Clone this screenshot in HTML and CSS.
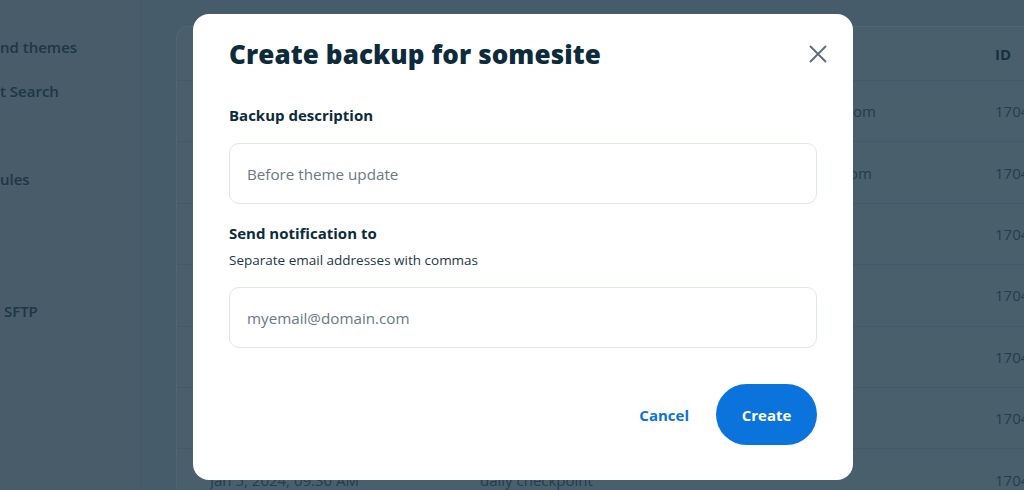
FILE: index.html
```html
<!DOCTYPE html>
<html lang="en">
<head>
<meta charset="utf-8">
<title>Create backup</title>
<link rel="stylesheet" href="styles.css">
</head>
<body>
<div class="app">
  <aside class="sidebar">
    <nav class="nav">
      <div class="nav-item">nd themes</div>
      <div class="nav-item">t Search</div>
      <div class="nav-item"></div>
      <div class="nav-item">ules</div>
      <div class="nav-item"></div>
      <div class="nav-item"></div>
      <div class="nav-item">&nbsp;SFTP</div>
    </nav>
  </aside>
  <main class="main">
    <section class="card">
      <div class="row head">
        <div>Created</div><div>Description</div><div>Created by</div><div>ID</div>
      </div>
      <div class="row"><div>Jan 11, 2024, 02:14 PM</div><div>Before plugin update</div><div class="email e1">me@somesite.com</div><div>17049</div></div>
      <div class="row"><div>Jan 10, 2024, 09:30 AM</div><div>Manual backup</div><div class="email e2">me@somesite.com</div><div>17048</div></div>
      <div class="row"><div>Jan 9, 2024, 09:30 AM</div><div>daily checkpoint</div><div></div><div>17047</div></div>
      <div class="row"><div>Jan 8, 2024, 09:30 AM</div><div>daily checkpoint</div><div></div><div>17046</div></div>
      <div class="row"><div>Jan 7, 2024, 09:30 AM</div><div>daily checkpoint</div><div></div><div>17045</div></div>
      <div class="row"><div>Jan 6, 2024, 09:30 AM</div><div>daily checkpoint</div><div></div><div>17044</div></div>
      <div class="row"><div>Jan 5, 2024, 09:30 AM</div><div>daily checkpoint</div><div></div><div>17043</div></div>
    </section>
  </main>
</div>

<div class="modal" role="dialog" aria-labelledby="mtitle">
  <header class="modal-head">
    <h1 id="mtitle">Create backup for somesite</h1>
    <button class="close" aria-label="Close">
      <svg width="18" height="18" viewBox="0 0 18 18" fill="none" stroke="#5f6f7a" stroke-width="2" stroke-linecap="round"><path d="M1.5 1.5 L16.5 16.5 M16.5 1.5 L1.5 16.5"/></svg>
    </button>
  </header>
  <div class="field">
    <label class="label">Backup description</label>
    <div class="input">Before theme update</div>
  </div>
  <div class="field">
    <label class="label">Send notification to</label>
    <div class="hint">Separate email addresses with commas</div>
    <div class="input">myemail@domain.com</div>
  </div>
  <footer class="actions">
    <button class="btn-link">Cancel</button>
    <button class="btn-primary">Create</button>
  </footer>
</div>
</body>
</html>
```

FILE: styles.css
```css
* { box-sizing: border-box; }
html, body { margin: 0; padding: 0; }
body {
  width: 1024px;
  height: 490px;
  overflow: hidden;
  font-family: "Open Sans", "Liberation Sans", sans-serif;
  background: #465c6a;
  position: relative;
}
.app {
  display: flex;
  height: 490px;
}
.sidebar {
  width: 141px;
  flex: none;
  background: #485c69;
  border-right: 1px solid #42586a;
  overflow: hidden;
  padding-top: 36px;
}
.nav {
  display: flex;
  flex-direction: column;
}
.nav-item {
  height: 44px;
  line-height: 22px;
  font-size: 15px;
  font-weight: 600;
  color: #1e3646;
  white-space: pre;
}
.main {
  flex: 1;
  padding: 26px 0 0 35px;
  overflow: hidden;
}
.card {
  background: #4a5f6c;
  border: 1px solid #52666f;
  border-right: none;
  border-radius: 12px 0 0 0;
  height: 600px;
}
.row {
  display: grid;
  grid-template-columns: 270px 245px 270px 60px;
  padding-left: 33px;
  height: 61.4px;
  align-items: center;
  border-top: 1px solid #43596a;
  font-size: 15px;
  color: #233d4c;
  white-space: nowrap;
}
.row.head {
  height: 53px;
  border-top: none;
  font-weight: 700;
  color: #15303f;
}
.row > div { overflow: hidden; }
.email { text-align: right; }
.email.e1 { padding-right: 119px; }
.email.e2 { padding-right: 123px; }

.modal {
  position: absolute;
  left: 193px;
  top: 14px;
  width: 660px;
  height: 466px;
  background: #fff;
  border-radius: 16px;
  padding: 20px 36px 35px 36px;
  display: flex;
  flex-direction: column;
}
.modal-head {
  display: flex;
  align-items: center;
  justify-content: space-between;
  height: 40px;
  margin-bottom: 31px;
}
.modal-head h1 {
  margin: 0;
  font-size: 26px;
  line-height: 40px;
  font-weight: 800;
  color: #0d2b3b;
  letter-spacing: 0.1px;
}
.close {
  border: none;
  background: none;
  padding: 0;
  width: 18px;
  height: 18px;
  margin-right: -10px;
  display: flex;
}
.field {
  display: flex;
  flex-direction: column;
  margin-bottom: 19px;
}
.label {
  font-size: 15px;
  line-height: 20px;
  font-weight: 700;
  color: #0d2b3b;
  margin-bottom: 18px;
}
.field .label + .hint { margin-top: -10px; }
.hint {
  font-size: 13.5px;
  line-height: 18px;
  color: #1c3747;
  margin-bottom: 18px;
}
.input {
  height: 61px;
  border: 1px solid #dfe7ee;
  border-radius: 10px;
  padding: 0 17px;
  display: flex;
  align-items: center;
  font-size: 15.2px;
  color: #6a7882;
}
.actions {
  margin-top: auto;
  display: flex;
  justify-content: flex-end;
  align-items: center;
  gap: 27px;
}
.btn-link {
  border: none;
  background: none;
  padding: 0;
  font-family: inherit;
  font-size: 15px;
  font-weight: 700;
  color: #0b72d9;
}
.btn-primary {
  border: none;
  width: 101px;
  height: 61px;
  border-radius: 31px;
  background: #0b73dc;
  color: #fff;
  font-family: inherit;
  font-size: 15px;
  font-weight: 700;
}
```
